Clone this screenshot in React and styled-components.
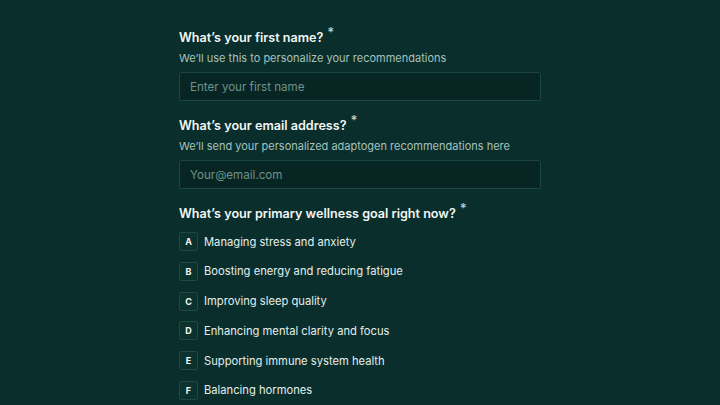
import React from 'react'
import styled, { createGlobalStyle } from 'styled-components'

const GlobalStyle = createGlobalStyle`
  html, body {
    margin: 0;
    padding: 0;
    background: #0a2e2b;
  }
  body {
    font-family: "Inter", "Liberation Sans", sans-serif;
    color: #e8f1ef;
  }
`

const Page = styled.div`
  width: 720px;
  height: 405px;
  overflow: hidden;
  background: #0a2e2b;
  display: flex;
  justify-content: center;
`

const Form = styled.div`
  width: 362px;
  padding-top: 28px;
  display: flex;
  flex-direction: column;
`

const Field = styled.div`
  display: flex;
  flex-direction: column;
  margin-bottom: 15px;
`

const Label = styled.div`
  font-size: 12.6px;
  font-weight: 600;
  color: #f1f6f5;
  line-height: 19px;
  display: flex;
  align-items: flex-start;
`

const Star = styled.span`
  font-size: 13px;
  margin-left: 4px;
  color: #b9cfcb;
  line-height: 12px;
  margin-top: -2px;
`

const Hint = styled.div`
  font-size: 11px;
  color: #a6c2bd;
  margin-top: 3px;
  line-height: 16px;
`

const Input = styled.input`
  box-sizing: border-box;
  margin-top: 6px;
  width: 100%;
  height: 29px;
  padding: 0 10px;
  background: #072623;
  border: 1px solid #1b4641;
  border-radius: 3px;
  font-family: inherit;
  font-size: 11.6px;
  color: #e8f1ef;
  outline: none;
  &::placeholder {
    color: #6f918c;
  }
`

const Options = styled.div`
  display: flex;
  flex-direction: column;
  gap: 10.8px;
  margin-top: 9px;
`

const Option = styled.div`
  display: flex;
  align-items: center;
  gap: 6px;
  font-size: 11.2px;
  color: #e4eeec;
`

const Key = styled.span`
  box-sizing: border-box;
  width: 19px;
  height: 19px;
  display: grid;
  place-items: center;
  border: 1px solid #1d4843;
  background: #0c322e;
  border-radius: 2px;
  font-size: 9px;
  font-weight: 700;
  color: #f1f6f5;
`

const goals = [
  'Managing stress and anxiety',
  'Boosting energy and reducing fatigue',
  'Improving sleep quality',
  'Enhancing mental clarity and focus',
  'Supporting immune system health',
  'Balancing hormones',
]

export default function App() {
  return (
    <Page>
      <GlobalStyle />
      <Form>
        <Field>
          <Label>What’s your first name?<Star>*</Star></Label>
          <Hint>We’ll use this to personalize your recommendations</Hint>
          <Input type="text" placeholder="Enter your first name" />
        </Field>
        <Field>
          <Label>What’s your email address?<Star>*</Star></Label>
          <Hint>We’ll send your personalized adaptogen recommendations here</Hint>
          <Input type="email" placeholder="Your@email.com" />
        </Field>
        <Field>
          <Label>What’s your primary wellness goal right now?<Star>*</Star></Label>
          <Options>
            {goals.map((g, i) => (
              <Option key={g}>
                <Key>{String.fromCharCode(65 + i)}</Key>
                {g}
              </Option>
            ))}
          </Options>
        </Field>
      </Form>
    </Page>
  )
}
